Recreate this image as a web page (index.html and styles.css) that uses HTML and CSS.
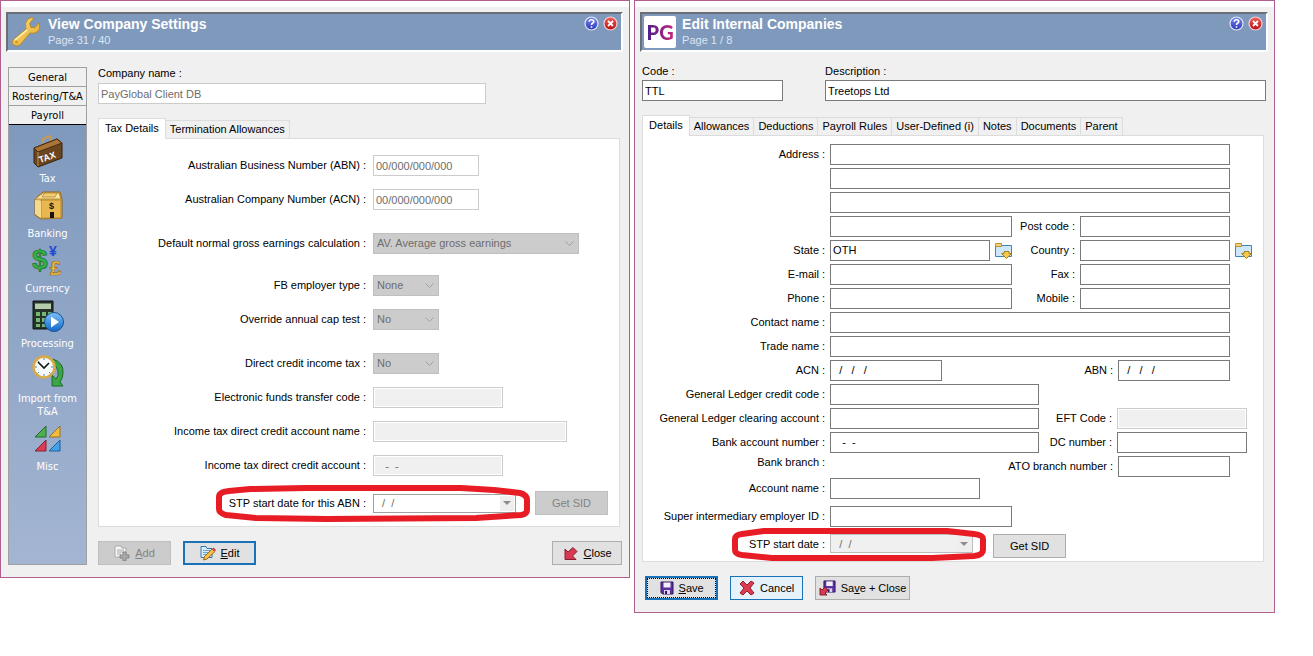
FILE: index.html
```html
<!DOCTYPE html>
<html lang="en">
  <head>
    <meta charset="UTF-8" />
    <title>Company Settings</title>
    <link rel="stylesheet" href="styles.css">
  </head>
  <body>
    <svg class="defs" width="0" height="0" aria-hidden="true">
      <defs>
        <linearGradient id="blueBall" x1="0" y1="0" x2="0" y2="1">
          <stop offset="0" stop-color="#7c8cf0" /><stop offset="1" stop-color="#2a36b8" />
        </linearGradient>
        <linearGradient id="redBall" x1="0" y1="0" x2="0" y2="1">
          <stop offset="0" stop-color="#f0605c" /><stop offset="1" stop-color="#b80c10" />
        </linearGradient>
        <linearGradient id="gold" x1="0" y1="0" x2="1" y2="1">
          <stop offset="0" stop-color="#ffe88a" /><stop offset="1" stop-color="#e0a020" />
        </linearGradient>
        <linearGradient id="playBall" x1="0" y1="0" x2="0" y2="1">
          <stop offset="0" stop-color="#7cc0f8" /><stop offset="1" stop-color="#1468c8" />
        </linearGradient>
        <symbol id="help" viewBox="0 0 15 15">
          <circle cx="7.5" cy="7.5" r="6.5" fill="url(#blueBall)" stroke="#e4e8fa" stroke-width="1.2" />
          <path d="M5.2 5.8Q5.3 3.8 7.5 3.8Q9.8 3.8 9.8 5.6Q9.8 6.7 8.4 7.3Q7.5 7.8 7.5 9M7.5 10.2V11.8" fill="none" stroke="#fff" stroke-width="1.6" />
        </symbol>
        <symbol id="shut" viewBox="0 0 15 15">
          <circle cx="7.5" cy="7.5" r="6.5" fill="url(#redBall)" stroke="#f4d0d0" stroke-width="1.2" />
          <path d="M5 5L10 10M10 5L5 10" stroke="#fff" stroke-width="1.8" />
        </symbol>
        <symbol id="folder" viewBox="0 0 17 17">
          <path d="M.5 3.500H16.500V14.500H.5Z" fill="#cfe8f9" stroke="#3c86b8" />
          <path d="M.5 1.500H6.500V4.500H.5Z" fill="#f4d27a" stroke="#b8923a" />
          <path d="M9 9.500H14V11.500H16.500L11.500 16.500L6.500 11.500H9Z" fill="#f7c948" stroke="#b07f22" />
        </symbol>
        <symbol id="disk" viewBox="0 0 14 14">
          <path d="M1 1H13V13H2.5L1 11.5Z" fill="#5a2fa0" stroke="#30145e" />
          <path d="M3.5 1.5H10.5V6.5H3.5Z" fill="#f2eefa" />
          <path d="M4 9H10V13H4Z" fill="#dcd4ee" />
          <path d="M5 10H7V13H5Z" fill="#30145e" />
        </symbol>
      </defs>
    </svg>

    <section class="window window-settings">
      <header class="titlebar">
        <svg class="title-icon" viewBox="0 0 32 32" aria-hidden="true">
          <path d="M3 24L16 13Q14 7 18 3Q21 1 24 2L19.500 7.500L21 11.500L25 11.500L29 7Q31 13 27 16Q24 18 20 17L10 29Q7 31 4 29Q1 27 3 24Z" fill="url(#gold)" stroke="#b98a2c" />
          <path d="M5 24L17 14" stroke="#fff3b8" stroke-width="1.5" />
          <circle cx="6.500" cy="26" r="1.600" fill="#d79a28" />
        </svg>
        <div class="title-text">
          <h1>View Company Settings</h1>
          <p>Page 31 / 40</p>
        </div>
        <div class="title-buttons">
          <button aria-label="Help"><svg><use href="#help" /></svg></button>
          <button aria-label="Close window"><svg><use href="#shut" /></svg></button>
        </div>
      </header>

      <div class="settings-body">
        <nav class="sidebar">
          <button class="side-head">General</button>
          <button class="side-head">Rostering/T&amp;A</button>
          <button class="side-head side-head-open">Payroll</button>
          <div class="side-items">
            <button class="side-item">
              <svg viewBox="0 0 32 32" aria-hidden="true">
                <path d="M11 8V4L17 1L19 3V6" fill="none" stroke="#c99a4a" stroke-width="2" />
                <path d="M2 13L25 4L30 8V23L6 32L2 28Z" fill="#6b4420" stroke="#3b230d" />
                <path d="M2 13L25 4L30 8L6 17Z" fill="#a87437" stroke="#4a2d10" />
                <path d="M6 17V31" stroke="#c3924e" />
                <text x="8" y="28" font-size="9" transform="rotate(-19 8 28)" class="icon-text" fill="#fff">TAX</text>
              </svg>
              Tax
            </button>
            <button class="side-item">
              <svg viewBox="0 0 32 32" aria-hidden="true">
                <path d="M3 9L11 2H28L30 9V28L9 29L3 25Z" fill="#e9bd5c" stroke="#8c6420" />
                <path d="M3 9L11 3H27L29 9H9Z" fill="#fbe6a0" stroke="#b48a35" />
                <path d="M11 5L13 3H25L23 7H10Z" fill="#f1cd74" stroke="#a67a28" stroke-width=".7" />
                <path d="M9 10H29V28H9Z" fill="#e8b750" stroke="#b48a35" />
                <path d="M3 10L9 11V28L3 24Z" fill="#f6d98b" />
                <path d="M18 22H22V28H18Z" fill="#1c1206" />
                <text x="17" y="19" font-size="9" class="icon-text" fill="#1c1206">$</text>
              </svg>
              Banking
            </button>
            <button class="side-item">
              <svg viewBox="0 0 32 32" aria-hidden="true">
                <text x="0" y="24" font-size="28" class="icon-text" fill="#35b04a" stroke="#14702a" stroke-width=".7">$</text>
                <text x="17" y="11" font-size="14" class="icon-text" fill="#2348d0">¥</text>
                <text x="18" y="30" font-size="20" class="icon-text" fill="#f5c445" stroke="#94691a" stroke-width=".7">£</text>
              </svg>
              Currency
            </button>
            <button class="side-item">
              <svg viewBox="0 0 32 32" aria-hidden="true">
                <path d="M1 1H21V29H1Z" fill="#27322b" stroke="#0e1410" />
                <path d="M3 3.500H19V9H3Z" fill="#b5cfae" />
                <path d="M4 12H8V16H4ZM10 12H14V16H10ZM16 12H20V16H16ZM4 18H8V22H4ZM10 18H14V22H10ZM4 24H8V27H4ZM10 24H14V27H10Z" fill="#73b86f" />
                <circle cx="22" cy="22" r="9.500" fill="url(#playBall)" stroke="#165299" />
                <path d="M19 16.500L27 22L19 27.500Z" fill="#fff" />
              </svg>
              Processing
            </button>
            <button class="side-item">
              <svg viewBox="0 0 32 32" aria-hidden="true">
                <path d="M21 4Q32 8 31 18Q31 23 28 27L31 31H20V20L24 24Q27 21 26 16Q25 11 20 8Z" fill="#3da544" stroke="#1b6a26" />
                <circle cx="12" cy="12" r="10.500" fill="#f7fafa" stroke="#d8a948" stroke-width="2.500" />
                <path d="M12 3V5M12 19V21M3 12H5M19 12H21M5.600 5.600L7 7M17 17L18.400 18.400M5.600 18.400L7 17" stroke="#4a86a8" />
                <path d="M6 7L12 13L17 8" fill="none" stroke="#151515" stroke-width="1.600" />
              </svg>
              Import from T&amp;A
            </button>
            <button class="side-item">
              <svg viewBox="0 0 32 32" aria-hidden="true">
                <path d="M3 14L14 3V14Z" fill="#4db04c" stroke="#236b28" />
                <path d="M17 14L28 3V14Z" fill="#f3bd3c" stroke="#96701c" />
                <path d="M3 28L14 17V28Z" fill="#dc3d55" stroke="#86202f" />
                <path d="M17 28L28 17V28Z" fill="#45a0ea" stroke="#1e5f9c" />
              </svg>
              Misc
            </button>
          </div>
        </nav>

        <main class="settings-main">
          <label for="company">Company name :</label>
          <input class="company-field" id="company" value="PayGlobal Client DB" disabled>

          <div class="tabs settings-tabs">
            <button class="tab tab-active">Tax Details</button>
            <button class="tab">Termination Allowances</button>
          </div>

          <form class="panel settings-panel">
            <div class="row">
              <label for="abn">Australian Business Number (ABN) :</label>
              <input class="w-number" id="abn" value="00/000/000/000" disabled>
            </div>
            <div class="row">
              <label for="acn">Australian Company Number (ACN) :</label>
              <input class="w-number" id="acn" value="00/000/000/000" disabled>
            </div>
            <div class="row row-group">
              <label for="gross">Default normal gross earnings calculation :</label>
              <select class="w-gross" id="gross" disabled><option>AV. Average gross earnings</option></select>
            </div>
            <div class="row row-near">
              <label for="fb">FB employer type :</label>
              <select class="w-choice" id="fb" disabled><option>None</option></select>
            </div>
            <div class="row">
              <label for="cap">Override annual cap test :</label>
              <select class="w-choice" id="cap" disabled><option>No</option></select>
            </div>
            <div class="row row-group">
              <label for="dcit">Direct credit income tax :</label>
              <select class="w-choice" id="dcit" disabled><option>No</option></select>
            </div>
            <div class="row">
              <label for="eft">Electronic funds transfer code :</label>
              <input class="w-code filled" id="eft" disabled>
            </div>
            <div class="row">
              <label for="itname">Income tax direct credit account name :</label>
              <input class="w-name filled" id="itname" disabled>
            </div>
            <div class="row">
              <label for="itacc">Income tax direct credit account :</label>
              <input class="w-code filled" id="itacc" value="&nbsp;&nbsp; -&nbsp; -" disabled>
            </div>
            <div class="row row-stp">
              <label for="stp">STP start date for this ABN :</label>
              <div class="date">
                <input id="stp" value="&nbsp; /&nbsp; /" disabled>
                <button type="button" aria-label="Pick date" disabled></button>
              </div>
              <button type="button" class="btn" disabled>Get SID</button>
              <svg class="ring ring-settings" viewBox="0 0 314 37" preserveAspectRatio="none" aria-hidden="true">
                <path d="M13 6L34 4L90 3H245L278 5L304 8Q311 10 311 15V25Q311 29 305 30L260 33L110 34L40 33L10 30Q3 28 3 24V12Q3 7 13 6Z" />
              </svg>
            </div>
          </form>

          <div class="actions">
            <button class="btn" disabled>
              <svg width="16" height="16" viewBox="0 0 16 16" aria-hidden="true">
                <path d="M1 1H7L8 3H12V12H1Z" fill="#f5f5f5" stroke="#aaa" />
                <path d="M3 5H10M3 7H10M3 9H7" stroke="#aaa" />
                <path d="M9 7H12V10H15V13H12V16H9V13H6V10H9Z" fill="#aaa" stroke="#858585" />
              </svg>
              <span><u>A</u>dd</span>
            </button>
            <button class="btn btn-focus">
              <svg width="16" height="16" viewBox="0 0 16 16" aria-hidden="true">
                <path d="M1 1.500H6L7 3.500H12V12.500H1Z" fill="#d8edfa" stroke="#3278b0" />
                <path d="M3 5.500H10M3 7.500H9M3 9.500H7" stroke="#6ba5cc" />
                <path d="M3.500 15L4.500 11.500L12 4L15 6.500L7 14Z" fill="#f5bf45" stroke="#9c6a1d" />
                <path d="M12 4L13.500 2.500L16 5L15 6.500Z" fill="#d83850" />
              </svg>
              <span><u>E</u>dit</span>
            </button>
            <button class="btn btn-close">
              <svg width="16" height="16" viewBox="0 0 16 16" aria-hidden="true">
                <path d="M2 14.500V4L5 7L10 2.500L14 6.500L9.500 11L13 14.500Z" fill="#d73852" stroke="#8a1c30" />
              </svg>
              <span><u>C</u>lose</span>
            </button>
          </div>
        </main>
      </div>
    </section>

    <section class="window window-company">
      <header class="titlebar">
        <div class="title-icon pg"><span>PG</span></div>
        <div class="title-text">
          <h1>Edit Internal Companies</h1>
          <p>Page 1 / 8</p>
        </div>
        <div class="title-buttons">
          <button aria-label="Help"><svg><use href="#help" /></svg></button>
          <button aria-label="Close window"><svg><use href="#shut" /></svg></button>
        </div>
      </header>

      <main class="company-body">
        <div class="company-head">
          <div class="head-code">
            <label for="code">Code :</label>
            <input id="code" value="TTL">
          </div>
          <div class="head-description">
            <label for="description">Description :</label>
            <input id="description" value="Treetops Ltd">
          </div>
        </div>

        <div class="tabs company-tabs">
          <button class="tab tab-active">Details</button>
          <button class="tab">Allowances</button>
          <button class="tab">Deductions</button>
          <button class="tab">Payroll Rules</button>
          <button class="tab">User-Defined (i)</button>
          <button class="tab">Notes</button>
          <button class="tab">Documents</button>
          <button class="tab">Parent</button>
        </div>

        <form class="panel company-panel">
          <div class="row">
            <label for="address1">Address :</label>
            <div class="fields"><input class="w-full" id="address1"></div>
          </div>
          <div class="row">
            <span class="no-label"></span>
            <div class="fields"><input class="w-full" aria-label="Address line 2"></div>
          </div>
          <div class="row">
            <span class="no-label"></span>
            <div class="fields"><input class="w-full" aria-label="Address line 3"></div>
          </div>
          <div class="row">
            <span class="no-label"></span>
            <div class="fields">
              <input class="w-half" aria-label="Address line 4">
              <label for="postcode">Post code :</label>
              <input class="w-side" id="postcode">
            </div>
          </div>
          <div class="row">
            <label for="state">State :</label>
            <div class="fields">
              <input class="w-state" id="state" value="OTH">
              <button type="button" class="lookup" aria-label="Find state"><svg><use href="#folder" /></svg></button>
              <label for="country">Country :</label>
              <input class="w-side" id="country">
            </div>
            <button type="button" class="lookup" aria-label="Find country"><svg><use href="#folder" /></svg></button>
          </div>
          <div class="row">
            <label for="email">E-mail :</label>
            <div class="fields">
              <input class="w-half" id="email">
              <label for="fax">Fax :</label>
              <input class="w-side" id="fax">
            </div>
          </div>
          <div class="row">
            <label for="phone">Phone :</label>
            <div class="fields">
              <input class="w-half" id="phone">
              <label for="mobile">Mobile :</label>
              <input class="w-side" id="mobile">
            </div>
          </div>
          <div class="row">
            <label for="contact">Contact name :</label>
            <div class="fields"><input class="w-full" id="contact"></div>
          </div>
          <div class="row">
            <label for="trade">Trade name :</label>
            <div class="fields"><input class="w-full" id="trade"></div>
          </div>
          <div class="row">
            <label for="cacn">ACN :</label>
            <div class="fields">
              <input class="w-tax" id="cacn" value="&nbsp; /&nbsp;&nbsp; /&nbsp;&nbsp; /">
              <label for="cabn">ABN :</label>
              <input class="w-tax" id="cabn" value="&nbsp; /&nbsp;&nbsp; /&nbsp;&nbsp; /">
            </div>
          </div>
          <div class="row">
            <label for="glcredit">General Ledger credit code :</label>
            <div class="fields"><input class="w-ledger" id="glcredit"></div>
          </div>
          <div class="row">
            <label for="glclear">General Ledger clearing account :</label>
            <div class="fields fields-wide">
              <input class="w-ledger" id="glclear">
              <label for="eftcode">EFT Code :</label>
              <input class="w-code filled" id="eftcode" disabled>
            </div>
          </div>
          <div class="row">
            <label for="bank">Bank account number :</label>
            <div class="fields fields-wide">
              <input class="w-ledger" id="bank" value="&nbsp;&nbsp; -&nbsp; -">
              <label for="dc">DC number :</label>
              <input class="w-code" id="dc">
            </div>
          </div>
          <div class="row row-branch">
            <span class="no-label">Bank branch :</span>
            <div class="fields">
              <label for="ato">ATO branch number :</label>
              <input class="w-tax" id="ato">
            </div>
          </div>
          <div class="row row-tall">
            <label for="account">Account name :</label>
            <div class="fields"><input class="w-side" id="account"></div>
          </div>
          <div class="row row-tall">
            <label for="super">Super intermediary employer ID :</label>
            <div class="fields"><input class="w-half" id="super"></div>
          </div>
          <div class="row row-stp">
            <label for="cstp">STP start date :</label>
            <div class="date filled">
              <input id="cstp" value="&nbsp; /&nbsp; /" disabled>
              <button type="button" aria-label="Pick date" disabled></button>
            </div>
            <button type="button" class="btn">Get SID</button>
            <svg class="ring ring-company" viewBox="0 0 254 33" preserveAspectRatio="none" aria-hidden="true">
              <path d="M10 6L32 3H215L242 6Q251 7 251 11V22Q251 27 242 28L200 30L40 30L10 27Q3 26 3 22V11Q3 7 10 6Z" />
            </svg>
          </div>
        </form>

        <div class="actions">
          <button class="btn btn-focus btn-default">
            <svg width="14" height="14" aria-hidden="true"><use href="#disk" /></svg>
            <span><u>S</u>ave</span>
          </button>
          <button class="btn btn-hover">
            <svg width="16" height="16" viewBox="0 0 16 16" aria-hidden="true">
              <path d="M1 4L4 1L8 5L12 1L15 3L11 8L15 13L12 15L8 11L4 15L1 13L5 8Z" fill="#dc3b50" stroke="#94202f" />
            </svg>
            <span>Cancel</span>
          </button>
          <button class="btn btn-long">
            <svg width="17" height="16" viewBox="0 0 17 16" aria-hidden="true">
              <svg x="4" y="0" width="13" height="13"><use href="#disk" /></svg>
              <path d="M1 15V8L3 10L6 7L9 10L6 13L8 15Z" fill="#d73852" stroke="#8a1c30" />
            </svg>
            <span>Sa<u>v</u>e + Close</span>
          </button>
        </div>
      </main>
    </section>
  </body>
</html>
```
FILE: styles.css
```css
* {
  box-sizing: border-box;
}

body {
  display: flex;
  align-items: flex-start;
  gap: 4px;
  margin: 0;
  padding-right: 38px;
  background: #fff;
  color: #000;
  font-family: "Liberation Sans", Arial, sans-serif;
  font-size: 11px;
  line-height: 13px;
}

button,
input,
select {
  margin: 0;
  font: inherit;
  color: inherit;
}

label {
  display: block;
  white-space: nowrap;
}

.defs {
  position: absolute;
}

.window {
  min-width: 0;
  padding: 5px 6px 12px 5px;
  border: 1px solid #b0608f;
  background: linear-gradient(#fff 6px, #f0f0f0 6px);
}

.window-settings {
  flex: 630 1 0;
}

.window-company {
  flex: 641 1 0;
}

/* title bar */
.titlebar {
  display: flex;
  align-items: center;
  gap: 6px;
  height: 40px;
  margin-top: 6px;
  padding-left: 2px;
  border: 2px solid #fff;
  border-top-color: #6b6f75;
  border-left-color: #6b6f75;
  background: #7f99bc;
  color: #fff;
}

.title-icon {
  width: 32px;
  height: 32px;
}

.title-text {
  flex: 1;
}

.titlebar h1 {
  margin: 0;
  font-size: 14px;
  line-height: 16px;
}

.titlebar p {
  margin: 0;
  font-size: 11px;
  line-height: 16px;
  color: #dbe5f4;
}

.title-buttons {
  display: flex;
  align-self: flex-start;
  gap: 4px;
  padding: 2px 3px;
}

.title-buttons button {
  width: 15px;
  height: 15px;
  padding: 0;
  border: 0;
  background: none;
}

.title-buttons svg {
  display: block;
  width: 15px;
  height: 15px;
}

.pg {
  display: flex;
  align-items: center;
  justify-content: center;
  border-radius: 2px;
  background: #fff;
  font: 900 20px Lato, sans-serif;
}

.pg span {
  background: linear-gradient(90deg, #4b1d8c, #c8287c);
  background-clip: text;
  -webkit-background-clip: text;
  color: transparent;
}

/* sidebar */
.settings-body {
  display: flex;
  gap: 11px;
  padding: 15px 1px 0 2px;
}

.sidebar {
  display: flex;
  flex-direction: column;
  width: 79px;
  border: 1px solid #a0a0a0;
  font-family: "DejaVu Sans Condensed", "DejaVu Sans", sans-serif;
}

.side-head {
  height: 19px;
  padding: 0;
  border: 0;
  border-bottom: 1px solid #a0a0a0;
  background: #f0f0f0;
  white-space: nowrap;
}

.side-head-open {
  border-bottom-color: #000;
}

.side-items {
  flex: 1;
  padding-top: 10px;
  background: linear-gradient(#7f99bd, #a3b5d2);
}

.side-item {
  display: block;
  width: 100%;
  padding: 0 6px 5px;
  border: 0;
  background: none;
  color: #fff;
}

.side-item svg {
  display: block;
  width: 32px;
  height: 32px;
  margin: 0 auto 5px;
  overflow: visible;
}

.icon-text {
  font-family: "Liberation Sans", Arial, sans-serif;
  font-weight: bold;
}

/* fields */
input,
select {
  height: 21px;
  padding: 0 2px;
  border: 1px solid #7a7a7a;
  border-radius: 0;
  background: #fff;
}

input:disabled {
  border-color: #ccc;
  color: #6d6d6d;
}

input.filled {
  border-color: #ccc;
  background: #f0f0f0;
  box-shadow: inset 0 0 0 1px #fff;
}

select:disabled {
  appearance: none;
  padding: 0 3px;
  border-color: #bfbfbf;
  background: #ccc url("data:image/svg+xml,%3Csvg xmlns='http://www.w3.org/2000/svg' width='9' height='6'%3E%3Cpath d='M.5 .5L4.500 4.500L8.500 .5' fill='none' stroke='%23a0a0a0'/%3E%3C/svg%3E") no-repeat right 4px center;
  color: #6d6d6d;
  opacity: 1;
}

.date {
  display: flex;
  width: 143px;
  height: 19px;
  border: 1px solid #a0a0a0;
  background: #fff;
}

.date.filled {
  border-color: #bcbcbc;
  background: #f0f0f0;
}

.date input {
  flex: 1;
  min-width: 0;
  height: 17px;
  border: 0;
  background: none;
}

.date button {
  width: 16px;
  padding: 0;
  border: 1px solid #fff;
  background: #eee;
}

.date.filled button {
  border-color: #f0f0f0;
}

.date button::before {
  content: "";
  display: block;
  width: 0;
  margin: auto;
  border: 4px solid transparent;
  border-top-color: #8c8c8c;
  border-bottom: 0;
}

.w-number { width: 106px; }
.w-gross { width: 206px; }
.w-choice { width: 66px; }
.w-code { width: 130px; }
.w-name { width: 194px; }
.w-full { width: 100%; }
.w-half { width: 182px; }
.w-side { width: 150px; }
.w-state { width: 160px; }
.w-tax { width: 112px; }
.w-ledger { width: 209px; }

/* tabs and panels */
.tabs {
  display: flex;
  align-items: flex-end;
}

.tab {
  height: 18px;
  padding: 0 4px;
  border: 1px solid #dcdcdc;
  border-left: 0;
  border-bottom: 0;
  background: #f0f0f0;
  white-space: nowrap;
}

.tab-active {
  height: 21px;
  margin-bottom: -1px;
  padding: 0 6px 2px;
  border-left: 1px solid #dcdcdc;
  background: #fff;
  z-index: 1;
}

.panel {
  border: 1px solid #dcdcdc;
  background: #fff;
}

.row {
  display: flex;
  align-items: center;
}

.row > label,
.no-label {
  flex: none;
  text-align: right;
}

.row-stp {
  position: relative;
}

.ring {
  position: absolute;
  fill: none;
  stroke: #e71c24;
  stroke-width: 6;
  stroke-linejoin: round;
  pointer-events: none;
}

/* buttons */
.actions {
  display: flex;
  gap: 12px;
  margin-top: 14px;
}

.btn {
  display: flex;
  align-items: center;
  justify-content: center;
  gap: 5px;
  width: 73px;
  height: 24px;
  padding: 0;
  border: 1px solid #adadad;
  background: #e1e1e1;
  white-space: nowrap;
}

.btn:disabled {
  border-color: #bfbfbf;
  background: #ccc;
  color: #838383;
}

.btn-focus {
  border: 2px solid #1a72b8;
}

.btn-default {
  outline: 1px dotted #000;
  outline-offset: -3px;
}

.btn-hover {
  border-color: #1a72b8;
  background: #e5f1fb;
}

.btn-long {
  width: 95px;
}

.btn-close {
  width: 70px;
  margin-left: auto;
}

/* settings window */
.settings-main {
  display: flex;
  flex: 1;
  flex-direction: column;
  min-width: 0;
}

.company-field {
  width: 388px;
  margin-top: 3px;
}

.settings-tabs {
  margin-top: 14px;
}

.settings-panel {
  display: flex;
  flex-direction: column;
  gap: 13px;
  margin-right: 2px;
  padding: 16px 0 11px;
}

.settings-panel .row {
  gap: 7px;
}

.settings-panel .row > label {
  width: 267px;
}

.settings-panel .row-group {
  margin-top: 10px;
}

.settings-panel .row-near {
  margin-top: 8px;
}

.settings-panel .row-stp {
  margin-top: 2px;
}

.settings-panel .date {
  margin-right: 12px;
}

.ring-settings {
  top: -6px;
  left: 117px;
  width: 314px;
  height: 37px;
}

/* company window */
.company-body {
  padding: 13px 2px 0;
}

.company-head {
  display: flex;
  gap: 42px;
}

.company-head input {
  width: 100%;
  margin-top: 2px;
}

.head-code {
  width: 141px;
}

.head-description {
  flex: 1;
}

.company-tabs {
  margin-top: 14px;
}

.company-panel {
  margin-right: 2px;
  padding: 6px 0 3px;
}

.company-panel .row {
  gap: 5px;
  min-height: 24px;
}

.company-panel .row > label,
.no-label {
  width: 182px;
}

.fields {
  display: flex;
  align-items: center;
  width: 400px;
}

.fields-wide {
  width: 417px;
}

.fields label {
  flex: 1;
  margin-right: 5px;
  text-align: right;
}

.lookup {
  width: 17px;
  height: 17px;
  padding: 0;
  border: 0;
  background: none;
}

.fields .lookup {
  margin: 0 0 0 5px;
}

.lookup svg {
  display: block;
  width: 17px;
  height: 17px;
}

.company-panel .row-branch,
.company-panel .row-tall,
.company-panel .row-stp {
  align-items: flex-start;
}

.company-panel .row-branch {
  padding-top: 2px;
}

.company-panel .row-tall {
  min-height: 28px;
}

.company-panel .row-tall > label,
.company-panel .row-stp > label {
  line-height: 20px;
}

.company-panel .date {
  margin-right: 15px;
}

.ring-company {
  top: -6px;
  left: 89px;
  width: 254px;
  height: 33px;
}

.company-body .actions {
  padding-left: 3px;
}
```
